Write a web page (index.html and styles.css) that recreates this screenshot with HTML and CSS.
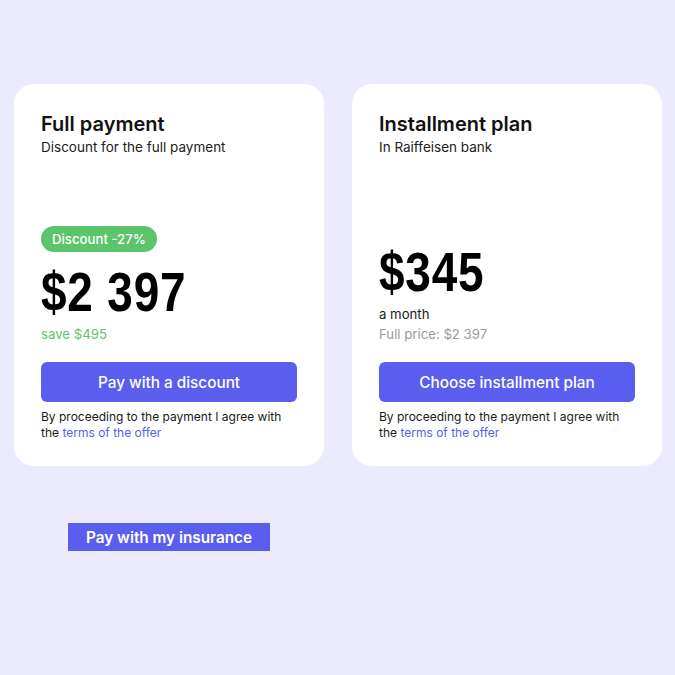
FILE: index.html
```html
<!DOCTYPE html>
<html lang="en">
<head>
<meta charset="utf-8">
<title>Payment options</title>
<link rel="stylesheet" href="styles.css">
</head>
<body>
<main class="page">
  <section class="plans">
    <article class="card">
      <header class="card-head">
        <h2 class="card-title">Full payment</h2>
        <p class="card-sub">Discount for the full payment</p>
      </header>
      <div class="card-body">
        <span class="badge">Discount -27%</span>
        <div class="price price-after-badge">$2 397</div>
        <p class="note note-green">save $495</p>
        <button class="btn">Pay with a discount</button>
        <p class="terms">By proceeding to the payment I agree with<br>the <a href="#" class="terms-link">terms of the offer</a></p>
      </div>
    </article>
    <article class="card">
      <header class="card-head">
        <h2 class="card-title">Installment plan</h2>
        <p class="card-sub">In Raiffeisen bank</p>
      </header>
      <div class="card-body">
        <div class="price">$345</div>
        <p class="note note-dark">a month</p>
        <p class="note note-gray">Full price: $2 397</p>
        <button class="btn">Choose installment plan</button>
        <p class="terms">By proceeding to the payment I agree with<br>the <a href="#" class="terms-link">terms of the offer</a></p>
      </div>
    </article>
  </section>
  <div class="extra">
    <button class="btn-insurance">Pay with my insurance</button>
  </div>
</main>
</body>
</html>
```
FILE: styles.css
```css
* { box-sizing: border-box; }
html, body { margin: 0; padding: 0; }
body {
  background: #ECEBFD;
  font-family: Inter, "Noto Sans", sans-serif;
  color: #111;
  min-height: 675px;
}
.page {
  padding: 84px 0 0 14px;
}
.plans {
  display: grid;
  grid-template-columns: 310px 310px;
  gap: 28px;
}
.card {
  background: #fff;
  border-radius: 20px;
  height: 382px;
  padding: 28px 27px 25px;
  display: flex;
  flex-direction: column;
}
.card-title {
  margin: 0;
  font-size: 20px;
  line-height: 24px;
  font-weight: 600;
  color: #111;
}
.card-sub {
  margin: 3px 0 0;
  font-size: 13.5px;
  line-height: 16px;
  color: #222;
}
.card-body {
  margin-top: auto;
  display: flex;
  flex-direction: column;
  align-items: flex-start;
}
.badge {
  display: inline-block;
  background: #5CC46B;
  color: #fff;
  font-size: 13.2px;
  font-weight: 500;
  line-height: 26px;
  height: 26px;
  padding: 0 11px;
  border-radius: 13px;
}
.price {
  font-family: "Liberation Sans", Arial, sans-serif;
  font-weight: 700;
  font-size: 56px;
  line-height: 56px;
  color: #000;
  transform: scaleX(0.82);
  transform-origin: left center;
  letter-spacing: 1px;
}
.price-after-badge { margin-top: 12px; }
.note {
  margin: 0;
  font-size: 13.2px;
  line-height: 20px;
}
.price + .note { margin-top: 4px; }
.note-green { color: #5CC46B; }
.note-dark { color: #1a1a1a; }
.note-gray { color: #9a9a9a; }
.btn {
  margin-top: 18px;
  width: 100%;
  height: 40px;
  border: 0;
  border-radius: 6px;
  background: #5A5EEE;
  color: #fff;
  font-family: Inter, "Noto Sans", sans-serif;
  font-size: 15.3px;
  font-weight: 500;
  cursor: pointer;
}
.terms {
  margin: 7px 0 0;
  font-size: 12px;
  line-height: 16px;
  color: #1a1a1a;
}
.terms-link {
  color: #5A5EEE;
  text-decoration: none;
}
.extra {
  padding: 57px 0 0 54px;
}
.btn-insurance {
  width: 202px;
  height: 28px;
  border: 0;
  border-radius: 0;
  background: #5A5EEE;
  color: #fff;
  font-family: Inter, "Noto Sans", sans-serif;
  font-size: 15.3px;
  font-weight: 600;
  padding: 0;
}
```
